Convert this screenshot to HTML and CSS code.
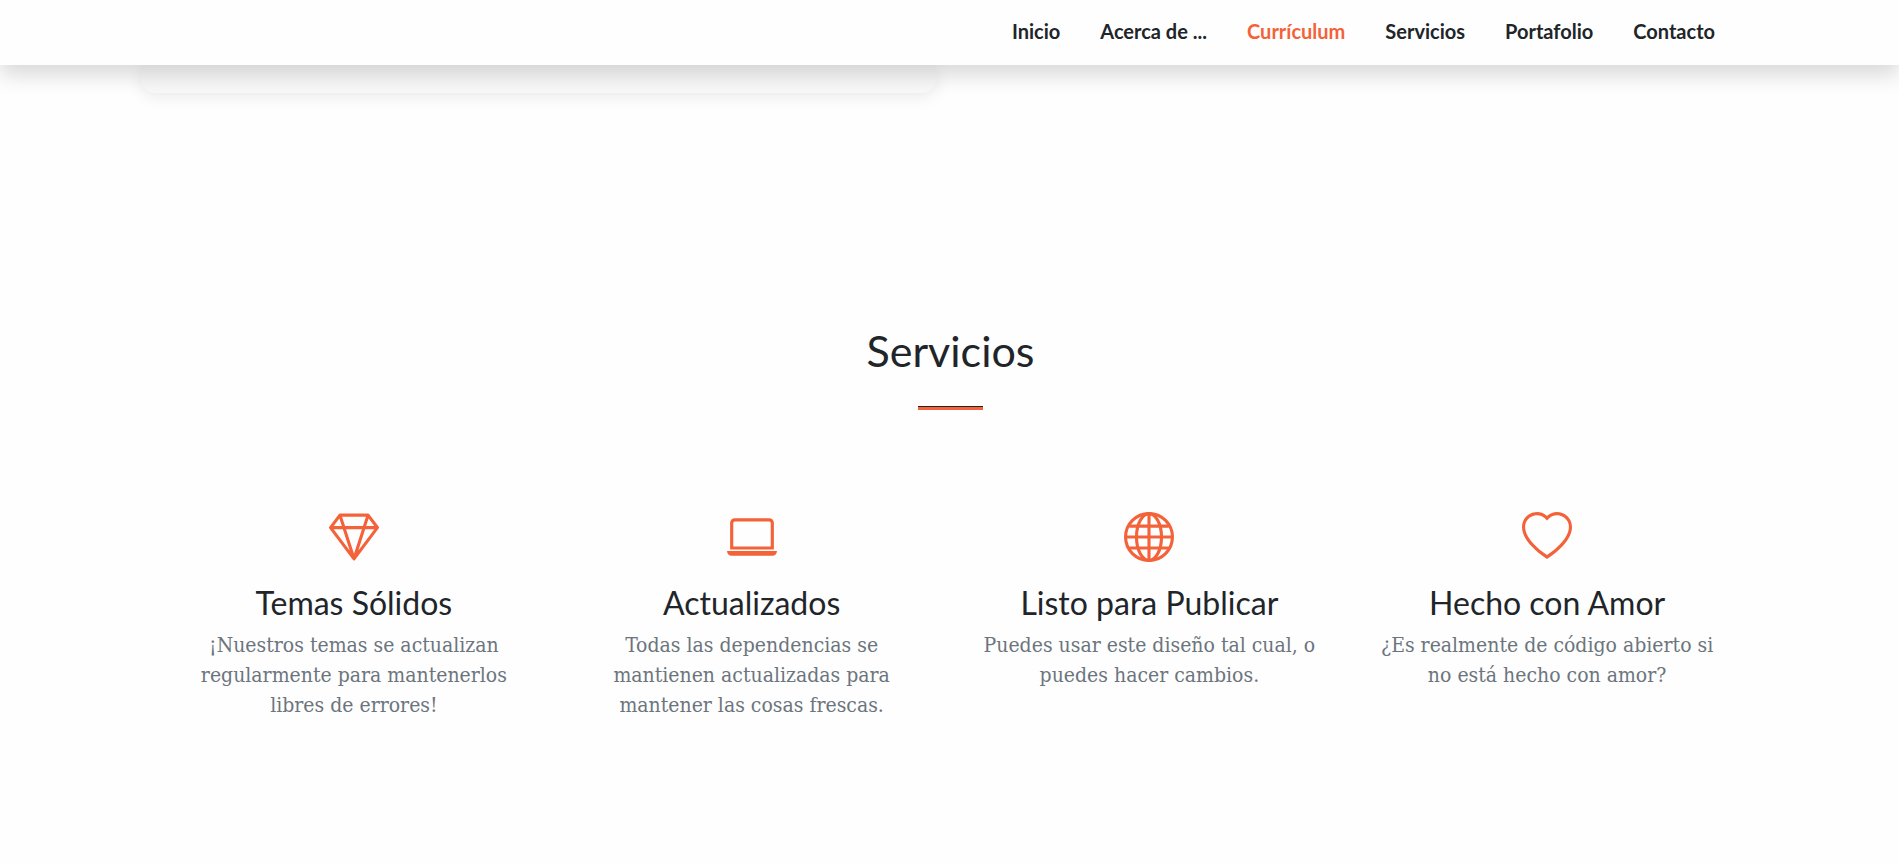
FILE: index.html
```html
<!DOCTYPE html>
<html lang="es">
<head>
<meta charset="utf-8">
<meta name="viewport" content="width=device-width, initial-scale=1">
<title>Servicios</title>
<link rel="stylesheet" href="styles.css">
</head>
<body>
<header class="navbar">
  <nav class="nav" aria-label="Principal">
    <a class="nav-link" href="#inicio">Inicio</a>
    <a class="nav-link" href="#acerca">Acerca de ...</a>
    <a class="nav-link active" href="#curriculum">Currículum</a>
    <a class="nav-link" href="#servicios">Servicios</a>
    <a class="nav-link" href="#portafolio">Portafolio</a>
    <a class="nav-link" href="#contacto">Contacto</a>
  </nav>
</header>
<main>
  <section class="resume" id="curriculum">
    <div class="resume-card"></div>
  </section>
  <section class="services" id="servicios">
    <h2 class="services-title">Servicios</h2>
    <hr class="divider">
    <div class="services-grid">
      <article class="service">
        <svg class="icon" viewBox="0 0 16 16" aria-hidden="true"><path d="M3.1.7a.5.5 0 0 1 .4-.2h9a.5.5 0 0 1 .4.2l2.976 3.974c.149.185.156.45.01.644L8.4 15.3a.5.5 0 0 1-.8 0L.1 5.3a.5.5 0 0 1 0-.6l3-4zm11.386 3.785-1.806-2.41-.776 2.413 2.582-.003zm-3.633.004.961-2.989H4.186l.963 2.995 5.704-.006zM5.47 5.495 8 13.366l2.532-7.876-5.062.005zm-1.371-.999-.78-2.422-1.818 2.425 2.598-.003zM1.499 5.5l5.113 6.817-2.192-6.82L1.5 5.5zm7.889 6.817 5.123-6.83-2.928.002-2.195 6.828z"/></svg>
        <h3 class="service-title">Temas Sólidos</h3>
        <p class="service-text">¡Nuestros temas se actualizan regularmente para mantenerlos libres de errores!</p>
      </article>
      <article class="service">
        <svg class="icon" viewBox="0 0 16 16" aria-hidden="true"><path d="M13.5 3a.5.5 0 0 1 .5.5V11H2V3.500a.5.5 0 0 1 .5-.5h11zm-11-1A1.5 1.5 0 0 0 1 3.500V12h14V3.500A1.5 1.5 0 0 0 13.500 2h-11zM0 12.500h16a1.5 1.5 0 0 1-1.500 1.500h-13A1.5 1.5 0 0 1 0 12.500z"/></svg>
        <h3 class="service-title">Actualizados</h3>
        <p class="service-text">Todas las dependencias se mantienen actualizadas para mantener las cosas frescas.</p>
      </article>
      <article class="service">
        <svg class="icon" viewBox="0 0 16 16" aria-hidden="true"><g fill="none" stroke="currentColor"><circle cx="8" cy="8" r="7.500"/><ellipse cx="8" cy="8" rx="4" ry="7.500"/><path d="M8 .5v15M.5 8h15M1.700 4.500h12.600M1.700 11.500h12.600"/></g></svg>
        <h3 class="service-title">Listo para Publicar</h3>
        <p class="service-text">Puedes usar este diseño tal cual, o puedes hacer cambios.</p>
      </article>
      <article class="service">
        <svg class="icon" viewBox="0 0 16 16" aria-hidden="true"><path d="m8 2.748-.717-.737C5.6.281 2.514.878 1.400 3.053c-.523 1.023-.641 2.500.314 4.385.92 1.815 2.834 3.989 6.286 6.357 3.452-2.368 5.365-4.542 6.286-6.357.955-1.886.838-3.362.314-4.385C13.486.878 10.400.28 8.717 2.010L8 2.748zM8 15C-7.333 4.868 3.279-3.040 7.824 1.143c.06.055.119.112.176.171a3.120 3.120 0 0 1 .176-.17C12.720-3.042 23.333 4.867 8 15z"/></svg>
        <h3 class="service-title">Hecho con Amor</h3>
        <p class="service-text">¿Es realmente de código abierto si no está hecho con amor?</p>
      </article>
    </div>
  </section>
</main>
</body>
</html>
```
FILE: styles.css
```css
* {
  box-sizing: border-box;
}

body {
  margin: 0;
  background: #fefefe;
  color: #212529;
  font-family: Lato, "Open Sans", sans-serif;
}

.navbar {
  position: relative;
  z-index: 1;
  padding: 19px 184px 22px;
  background: #fefefe;
  box-shadow: 0 10px 20px rgba(0, 0, 0, 0.15);
}

.nav {
  display: flex;
  justify-content: flex-end;
  gap: 40px;
}

.nav-link {
  color: #212529;
  font-size: 20px;
  font-weight: 700;
  line-height: 24px;
  text-decoration: none;
}

.nav-link.active {
  color: #f4623a;
}

.resume {
  padding: 0 141px;
}

.resume-card {
  width: 795px;
  max-width: 100%;
  height: 28px;
  border-radius: 0 0 14px 14px;
  background: #f8f8f8;
  box-shadow: 0 4px 16px rgba(0, 0, 0, 0.08);
}

.services {
  padding: 232px 153px 144px 155px;
  text-align: center;
}

.services-title {
  margin: 0;
  font-size: 43px;
  font-weight: 400;
  line-height: 52px;
}

.divider {
  width: 65px;
  height: 4px;
  margin: 29px auto 102px;
  border: 0;
  border-top: 1px solid #212529;
  background: #f4623a;
}

.services-grid {
  display: grid;
  grid-template-columns: repeat(4, 1fr);
}

.service {
  padding: 0 30px;
}

.icon {
  display: block;
  width: 50px;
  height: 50px;
  margin: 0 auto 22px;
  color: #f4623a;
  fill: currentColor;
}

.service-title {
  margin: 0 0 8px;
  font-size: 32px;
  font-weight: 400;
  line-height: 38px;
}

.service-text {
  margin: 0;
  color: #6c757d;
  font-family: "DejaVu Serif Condensed", "DejaVu Serif", serif;
  font-size: 21px;
  line-height: 30px;
}
```
